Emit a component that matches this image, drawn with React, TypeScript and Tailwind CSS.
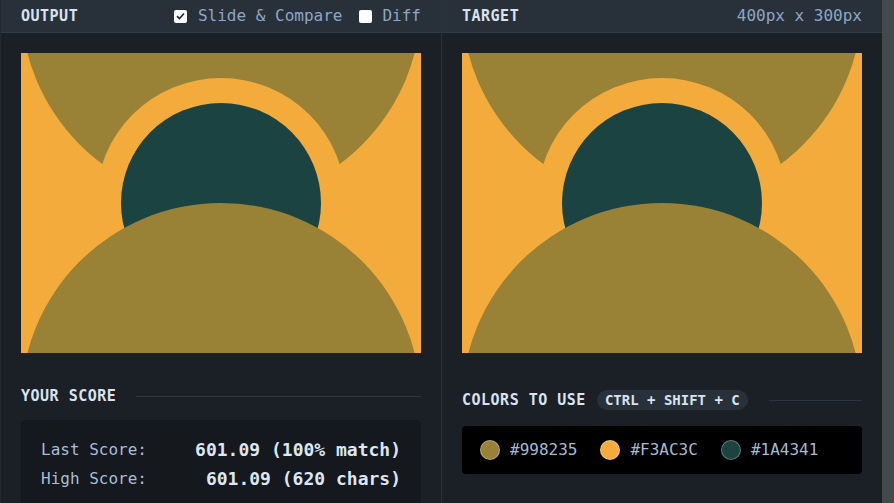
import React from 'react';

const MONO = { fontFamily: '"DejaVu Sans Mono", "Liberation Mono", monospace' };

const COLORS = ['#998235', '#F3AC3C', '#1A4341'];

function Battle() {
  // 400x300 target drawing
  return (
    <svg width="400" height="300" viewBox="0 0 400 300" className="block">
      <rect width="400" height="300" fill="#F3AC3C" />
      <circle cx="200" cy="-50" r="200" fill="#998235" />
      <circle cx="200" cy="150" r="125" fill="#F3AC3C" />
      <circle cx="200" cy="150" r="100" fill="#1A4341" />
      <circle cx="200" cy="350" r="200" fill="#998235" />
    </svg>
  );
}

function Checkbox({ checked }: { checked: boolean }) {
  return (
    <span className="flex h-[13px] w-[13px] items-center justify-center rounded-[2px] bg-white">
      {checked && (
        <svg width="9" height="8" viewBox="0 0 9 8">
          <path d="M1 4.2 L3.4 6.5 L8 1.5" fill="none" stroke="#1f2328" strokeWidth="1.6" />
        </svg>
      )}
    </span>
  );
}

export default function App() {
  return (
    <div className="flex h-[503px] w-[894px] overflow-hidden bg-[#1b1f26]" style={MONO}>
      {/* Output panel */}
      <div className="flex w-[442px] flex-col border-l border-r border-l-[#222830] border-r-[#2b323a]">
        <div className="flex h-[33px] items-center justify-between border-b border-[#323b45] bg-[#28313a] pl-[20px] pr-[20px]">
          <span className="text-[15px] font-bold tracking-[0.5px] text-[#d9e3f0]">OUTPUT</span>
          <div className="flex items-center text-[16px] text-[#8ea6c4]">
            <Checkbox checked />
            <span className="ml-[11px]">Slide &amp; Compare</span>
            <span className="ml-[17px]"><Checkbox checked={false} /></span>
            <span className="ml-[10px]">Diff</span>
          </div>
        </div>
        <div className="pl-[20px] pt-[20px]">
          <Battle />
        </div>
        <div className="mt-[32px] flex items-center pl-[20px] pr-[20px]">
          <span className="text-[15px] font-bold tracking-[0.5px] text-[#d9e3f0]">YOUR SCORE</span>
          <span className="ml-[20px] h-px flex-1 bg-[#2c343d]" />
        </div>
        <div className="ml-[20px] mt-[12px] w-[400px] flex-1 rounded-t-[5px] bg-[#15181d] px-[20px] pt-[15px]">
          <div className="flex items-center justify-between leading-[29px]">
            <span className="text-[16px] text-[#a9bdd6]">Last Score:</span>
            <span className="text-[18px] font-bold text-[#dde6f1]">601.09 (100% match)</span>
          </div>
          <div className="flex items-center justify-between leading-[29px]">
            <span className="text-[16px] text-[#a9bdd6]">High Score:</span>
            <span className="text-[18px] font-bold text-[#dde6f1]">601.09 (620 chars)</span>
          </div>
        </div>
      </div>

      {/* Target panel */}
      <div className="flex w-[440px] flex-col">
        <div className="flex h-[33px] items-center justify-between border-b border-[#323b45] bg-[#28313a] px-[20px]">
          <span className="text-[15px] font-bold tracking-[0.5px] text-[#d9e3f0]">TARGET</span>
          <span className="text-[16px] text-[#8ea6c4]">400px x 300px</span>
        </div>
        <div className="pl-[20px] pt-[20px]">
          <Battle />
        </div>
        <div className="mt-[36px] flex items-center px-[20px]">
          <span className="text-[15px] font-bold tracking-[0.5px] text-[#d9e3f0]">COLORS TO USE</span>
          <span className="ml-[11px] flex h-[20px] items-center rounded-full bg-[#28313a] px-[8px] text-[14px] font-bold text-[#d9e3f0]">
            CTRL + SHIFT + C
          </span>
          <span className="ml-[21px] h-px flex-1 bg-[#2c343d]" />
        </div>
        <div className="ml-[20px] mt-[14px] flex h-[48px] w-[400px] items-center gap-[23px] rounded-[4px] bg-black pl-[18px]">
          {COLORS.map((c) => (
            <div key={c} className="flex items-center">
              <span
                className="h-[20px] w-[20px] rounded-full border border-white/30"
                style={{ backgroundColor: c }}
              />
              <span className="ml-[10px] text-[16px] text-[#a5b9d1]">{c}</span>
            </div>
          ))}
        </div>
      </div>

      {/* Scrollbar */}
      <div className="w-[12px] bg-[#45494c]" />
    </div>
  );
}
